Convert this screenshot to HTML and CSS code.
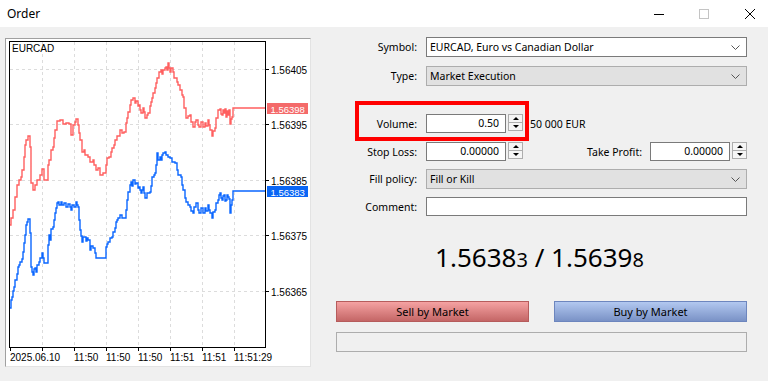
FILE: index.html
```html
<!DOCTYPE html>
<html lang="en">
<head>
    <meta charset="utf-8">
    <title>Order</title>
    <link rel="stylesheet" href="styles.css">
</head>
<body>
    <div class="window">
        <header class="titleBar">
            <span class="title">Order</span>
            <div class="windowButtons">
                <svg class="winIcon" width="10" height="10" viewBox="0 0 10 10"><line x1="0" y1="5.5" x2="10" y2="5.5" stroke="#000" stroke-width="1"/></svg>
                <svg class="winIcon" width="10" height="10" viewBox="0 0 10 10"><rect x="0.5" y="0.5" width="9" height="9" fill="none" stroke="#c4c4c4" stroke-width="1"/></svg>
                <svg class="winIcon closeIcon" width="10" height="10" viewBox="0 0 10 10"><path d="M0 0 L10 10 M10 0 L0 10" stroke="#000" stroke-width="1"/></svg>
            </div>
        </header>

        <div class="content">
            <div class="chartPanel">
                <svg class="chart" width="304" height="327" viewBox="6 39 304 327">
                    <g class="grid" stroke="#dcdcdc" stroke-width="1" stroke-dasharray="3 3">
                        <line x1="10" y1="69.5" x2="265" y2="69.5"/>
                        <line x1="10" y1="124.5" x2="265" y2="124.5"/>
                        <line x1="10" y1="180.5" x2="265" y2="180.5"/>
                        <line x1="10" y1="235.5" x2="265" y2="235.5"/>
                        <line x1="10" y1="291.5" x2="265" y2="291.5"/>
                        <line x1="42.5" y1="42" x2="42.5" y2="347"/>
                        <line x1="74.5" y1="42" x2="74.5" y2="347"/>
                        <line x1="106.5" y1="42" x2="106.5" y2="347"/>
                        <line x1="138.5" y1="42" x2="138.5" y2="347"/>
                        <line x1="170.5" y1="42" x2="170.5" y2="347"/>
                        <line x1="202.5" y1="42" x2="202.5" y2="347"/>
                        <line x1="234.5" y1="42" x2="234.5" y2="347"/>
                    </g>

                    <path class="askLine" fill="none" stroke="#ff5f5f" stroke-width="1.4" d="M10 225 H11 V218 H13 V210 H15 V197 H17 V185 H19 V180 H21 V177 H22 V170 H24 V157 H25 V145 H26 V140 H28 V136 H30 V147 H31 V183 H33 V190 H35 V185 H37 V180 H40 V175 H42 V169 H44 V180 H47 V180 H48 V165 H49 V160 H51 V150 H53 V147 H54 V138 H55 V130 H57 V121 H60 V120 H63 V124 H66 V123 H69 V124 H71 V135 H73 V125 H75 V122 H76 V119 H78 V125 H79 V133 H80 V140 H82 V152 H84 V150 H85 V155 H88 V157 H90 V162 H93 V160 H94 V165 H96 V170 H98 V168 H100 V175 H103 V173 H105 V173 H106 V165 H107 V158 H109 V157 H111 V152 H112 V148 H114 V145 H115 V140 H117 V136 H120 V130 H122 V133 H124 V132 H126 V123 H127 V118 H128 V112 H130 V105 H131 V100 H133 V98 H135 V103 H136 V101 H138 V106 H139 V105 H140 V110 H141 V113 H143 V108 H144 V112 H145 V118 H147 V115 H148 V113 H150 V106 H151 V102 H152 V98 H153 V93 H155 V88 H156 V83 H157 V78 H159 V72 H161 V70 H162 V74 H163 V70 H165 V68 H166 V67 H167 V70 H168 V63 H169 V68 H170 V72 H171 V68 H173 V72 H174 V78 H175 V78 H177 V82 H178 V85 H180 V90 H182 V95 H183 V97 H184 V108 H186 V118 H188 V116 H190 V115 H191 V122 H193 V127 H195 V122 H196 V120 H198 V125 H199 V127 H201 V122 H203 V127 H205 V123 H206 V126 H208 V120 H209 V125 H210 V130 H212 V136 H213 V131 H215 V128 H216 V118 H218 V110 H220 V109 H221 V114 H222 V115 H223 V110 H224 V113 H225 V109 H226 V117 H227 V111 H228 V115 H229 V110 H230 V124 H231 V119 H232 V117 H233 V108 H265"/>

                    <path class="bidLine" fill="none" stroke="#0a66ff" stroke-width="1.4" d="M10 308 H11 V300 H12 V297 H13 V291 H14 V287 H15 V280 H17 V274 H18 V267 H19 V265 H20 V262 H22 V259 H23 V252 H24 V243 H25 V235 H26 V225 H27 V222 H28 V219 H30 V233 H31 V267 H32 V272 H33 V275 H34 V269 H35 V268 H36 V272 H37 V265 H39 V262 H40 V258 H42 V253 H43 V258 H44 V263 H47 V263 H48 V245 H49 V235 H50 V240 H51 V229 H53 V227 H54 V220 H55 V213 H56 V208 H57 V203 H58 V202 H59 V205 H61 V202 H62 V205 H64 V203 H66 V207 H68 V204 H70 V207 H71 V210 H72 V205 H74 V207 H76 V202 H77 V205 H78 V207 H79 V220 H80 V230 H81 V236 H82 V242 H83 V237 H85 V237 H86 V241 H87 V238 H88 V240 H90 V250 H91 V246 H93 V248 H95 V253 H96 V258 H105 V258 H106 V247 H107 V244 H108 V242 H110 V238 H112 V237 H113 V232 H115 V228 H116 V222 H117 V220 H118 V218 H120 V215 H122 V218 H125 V218 H126 V210 H127 V200 H128 V192 H130 V185 H131 V182 H132 V186 H133 V180 H135 V184 H136 V183 H138 V188 H139 V187 H140 V190 H141 V193 H142 V190 H143 V187 H144 V193 H145 V198 H147 V193 H150 V192 H151 V186 H152 V177 H154 V175 H155 V173 H156 V165 H157 V153 H158 V160 H160 V157 H161 V160 H162 V155 H163 V153 H165 V152 H166 V155 H168 V157 H170 V158 H172 V162 H175 V163 H177 V170 H178 V175 H181 V177 H182 V185 H183 V190 H185 V198 H186 V202 H188 V205 H190 V207 H191 V211 H193 V213 H194 V207 H196 V203 H198 V210 H199 V213 H201 V208 H203 V213 H205 V208 H206 V211 H208 V205 H209 V210 H210 V213 H212 V218 H213 V212 H215 V210 H216 V203 H218 V200 H219 V195 H220 V193 H221 V198 H222 V200 H223 V196 H224 V195 H225 V201 H226 V200 H227 V195 H228 V197 H229 V199 H230 V213 H231 V205 H232 V200 H233 V191 H265"/>

                    <rect x="9.5" y="41.5" width="256" height="306" fill="none" stroke="#000" stroke-width="1"/>

                    <g stroke="#000" stroke-width="1">
                        <line x1="266" y1="69.5" x2="269" y2="69.5"/>
                        <line x1="266" y1="124.5" x2="269" y2="124.5"/>
                        <line x1="266" y1="180.5" x2="269" y2="180.5"/>
                        <line x1="266" y1="235.5" x2="269" y2="235.5"/>
                        <line x1="266" y1="291.5" x2="269" y2="291.5"/>
                        <line x1="10.5" y1="348" x2="10.5" y2="351"/>
                        <line x1="42.5" y1="348" x2="42.5" y2="351"/>
                        <line x1="74.5" y1="348" x2="74.5" y2="351"/>
                        <line x1="106.5" y1="348" x2="106.5" y2="351"/>
                        <line x1="138.5" y1="348" x2="138.5" y2="351"/>
                        <line x1="170.5" y1="348" x2="170.5" y2="351"/>
                        <line x1="202.5" y1="348" x2="202.5" y2="351"/>
                        <line x1="234.5" y1="348" x2="234.5" y2="351"/>
                    </g>

                    <g class="axisText">
                        <text x="12" y="51.5">EURCAD</text>
                        <text x="271" y="73.5">1.56405</text>
                        <text x="271" y="128.5">1.56395</text>
                        <text x="271" y="184.5">1.56385</text>
                        <text x="271" y="239.5">1.56375</text>
                        <text x="271" y="295.5">1.56365</text>
                        <text x="10" y="361">2025.06.10</text>
                        <text x="74" y="361">11:50</text>
                        <text x="106" y="361">11:50</text>
                        <text x="138" y="361">11:50</text>
                        <text x="170" y="361">11:51</text>
                        <text x="202" y="361">11:51</text>
                        <text x="234" y="361">11:51:29</text>
                    </g>

                    <rect x="267" y="103" width="41" height="11" fill="#f46a6a"/>
                    <text class="priceTag" x="270.5" y="112.5">1.56398</text>
                    <rect x="267" y="186" width="41" height="11" fill="#0a66f5"/>
                    <text class="priceTag" x="270.5" y="195.5">1.56383</text>
                </svg>
            </div>

            <div class="orderForm">
                <div class="formRow">
                    <label>Symbol:</label>
                    <div class="select">
                        <span>EURCAD, Euro vs Canadian Dollar</span>
                        <svg width="9" height="5" viewBox="0 0 9 5"><polyline points="0.5,0.5 4.5,4.5 8.5,0.5" fill="none" stroke="#555" stroke-width="1"/></svg>
                    </div>
                </div>

                <div class="formRow rowType">
                    <label>Type:</label>
                    <div class="select disabled">
                        <span>Market Execution</span>
                        <svg width="9" height="5" viewBox="0 0 9 5"><polyline points="0.5,0.5 4.5,4.5 8.5,0.5" fill="none" stroke="#555" stroke-width="1"/></svg>
                    </div>
                </div>

                <div class="formRow rowVolume">
                    <label>Volume:</label>
                    <div class="fieldGroup">
                        <div class="spinbox">
                            <div class="field">0.50</div>
                            <div class="spin"><span class="spinBtn"><i class="arrowUp"></i></span><span class="spinBtn"><i class="arrowDown"></i></span></div>
                        </div>
                        <span class="volumeNote">50 000 EUR</span>
                    </div>
                </div>

                <div class="formRow rowStops">
                    <label>Stop Loss:</label>
                    <div class="fieldGroup">
                        <div class="spinbox">
                            <div class="field">0.00000</div>
                            <div class="spin"><span class="spinBtn"><i class="arrowUp"></i></span><span class="spinBtn"><i class="arrowDown"></i></span></div>
                        </div>
                        <label class="inlineLabel">Take Profit:</label>
                        <div class="spinbox">
                            <div class="field">0.00000</div>
                            <div class="spin"><span class="spinBtn"><i class="arrowUp"></i></span><span class="spinBtn"><i class="arrowDown"></i></span></div>
                        </div>
                    </div>
                </div>

                <div class="formRow rowFill">
                    <label>Fill policy:</label>
                    <div class="select disabled">
                        <span>Fill or Kill</span>
                        <svg width="9" height="5" viewBox="0 0 9 5"><polyline points="0.5,0.5 4.5,4.5 8.5,0.5" fill="none" stroke="#555" stroke-width="1"/></svg>
                    </div>
                </div>

                <div class="formRow rowComment">
                    <label>Comment:</label>
                    <div class="textField"></div>
                </div>

                <div class="quote">1.5638<small>3</small> / 1.5639<small>8</small></div>

                <div class="actions">
                    <button class="tradeButton sellButton">Sell by Market</button>
                    <button class="tradeButton buyButton">Buy by Market</button>
                </div>

                <div class="statusBar"></div>

                <div class="highlight"></div>
            </div>
        </div>
    </div>
</body>
</html>
```

FILE: styles.css
```css
body {
    margin: 0;
    background-color: #f0f0f0;
    font-family: "Noto Sans", "Open Sans", sans-serif;
    font-size: 10.5px;
    color: #000000;
}

.window {
    width: 768px;
    height: 381px;
    display: flex;
    flex-direction: column;
    overflow: hidden;
}

/* title bar */
.titleBar {
    height: 27px;
    background-color: #ffffff;
    display: flex;
    align-items: center;
    padding-left: 7px;
}

.title {
    flex: 1;
    font-size: 12px;
}

.windowButtons {
    display: flex;
    align-items: center;
    gap: 35px;
    padding-right: 13px;
}

.closeIcon {
    margin-left: 1px;
}

/* main area */
.content {
    display: flex;
    gap: 25px;
    padding: 11px 21px 0 5px;
}

.chartPanel {
    width: 306px;
    height: 329px;
    box-sizing: border-box;
    background-color: #ffffff;
    border: 1px solid;
    border-color: #a0a0a0 #e3e3e3 #e3e3e3 #a0a0a0;
}

.chart {
    display: block;
}

.axisText text {
    font-family: "Liberation Sans", Arial, sans-serif;
    font-size: 10px;
    fill: #000000;
}

.priceTag {
    font-family: "Liberation Sans", Arial, sans-serif;
    font-size: 9.5px;
    fill: #ffffff;
}

/* order form */
.orderForm {
    position: relative;
    width: 411px;
    margin-top: -1px;
    display: flex;
    flex-direction: column;
}

.formRow {
    display: grid;
    grid-template-columns: 81px 1fr;
    column-gap: 9px;
    align-items: center;
}

.formRow label {
    text-align: right;
}

.rowType {
    margin-top: 9px;
}

.rowVolume {
    margin-top: 28px;
}

.rowStops {
    margin-top: 9px;
}

.rowFill {
    margin-top: 8px;
}

.rowComment {
    margin-top: 8px;
}

.select {
    height: 20px;
    box-sizing: border-box;
    border: 1px solid #7a7a7a;
    background-color: #ffffff;
    display: flex;
    align-items: center;
    justify-content: space-between;
    padding: 0 6px 0 3px;
}

.select.disabled {
    background-color: #e1e1e1;
    border-color: #adadad;
}

.select svg {
    margin-top: 1px;
}

.textField {
    height: 19px;
    box-sizing: border-box;
    border: 1px solid #7a7a7a;
    background-color: #ffffff;
}

.fieldGroup {
    display: flex;
    align-items: center;
}

.spinbox {
    display: flex;
    align-items: flex-start;
    gap: 2px;
}

.field {
    width: 80px;
    height: 19px;
    box-sizing: border-box;
    border: 1px solid #7a7a7a;
    background-color: #ffffff;
    text-align: right;
    padding-right: 6px;
    line-height: 17px;
}

.spin {
    width: 15px;
    display: flex;
    flex-direction: column;
}

.spinBtn {
    height: 9px;
    box-sizing: border-box;
    border: 1px solid #adadad;
    background-color: #f5f5f5;
    display: flex;
    align-items: center;
    justify-content: center;
}

.spinBtn + .spinBtn {
    margin-top: -1px;
}

.arrowUp {
    width: 0;
    height: 0;
    border-left: 3px solid transparent;
    border-right: 3px solid transparent;
    border-bottom: 3px solid #000000;
}

.arrowDown {
    width: 0;
    height: 0;
    border-left: 3px solid transparent;
    border-right: 3px solid transparent;
    border-top: 3px solid #000000;
}

.volumeNote {
    margin-left: 7px;
}

.inlineLabel {
    flex: 1;
    padding-right: 8px;
}

.quote {
    margin-top: 26px;
    height: 30px;
    line-height: 30px;
    text-align: center;
    font-size: 26px;
    padding-right: 4px;
}

.quote small {
    font-size: 20px;
}

.actions {
    display: flex;
    justify-content: space-between;
    margin-top: 29px;
}

.tradeButton {
    width: 193px;
    height: 21px;
    box-sizing: border-box;
    padding: 0;
    font-family: inherit;
    font-size: 11px;
    color: #000000;
}

.sellButton {
    background: linear-gradient(#f5a2a2, #c46666);
    border: 1px solid #b65c5c;
}

.buyButton {
    background: linear-gradient(#b2c8f0, #7a92c6);
    border: 1px solid #6d86be;
}

.statusBar {
    margin-top: 10px;
    height: 20px;
    box-sizing: border-box;
    border: 1px solid #adadad;
}

/* annotation frame drawn over the volume row */
.highlight {
    position: absolute;
    left: 19px;
    top: 64px;
    width: 174px;
    height: 40px;
    box-sizing: border-box;
    border: 4px solid #ff0000;
}
```
